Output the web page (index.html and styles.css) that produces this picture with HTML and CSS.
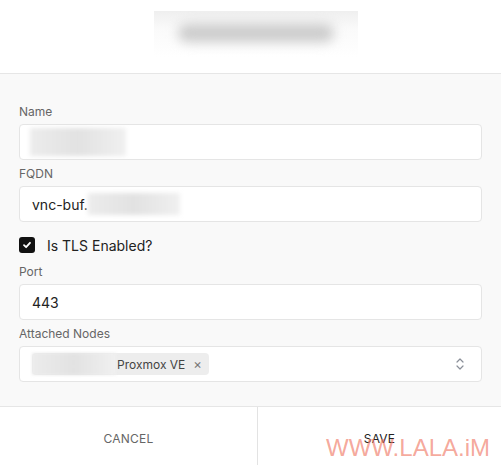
FILE: index.html
```html
<!DOCTYPE html>
<html lang="en">
<head>
  <meta charset="UTF-8">
  <meta name="viewport" content="width=device-width, initial-scale=1.0">
  <title>Edit Node</title>
  <link rel="stylesheet" href="styles.css">
</head>
<body>
  <div class="dialog">
    <div class="dialog-header">
      <div class="title-blur"><div class="blob"></div></div>
    </div>

    <form class="dialog-body">
      <div class="field">
        <label>Name</label>
        <div class="input"><span class="redacted name-redacted"></span></div>
      </div>
      <div class="field">
        <label>FQDN</label>
        <div class="input">vnc-buf.<span class="redacted fqdn-redacted"></span></div>
      </div>
      <div class="check-row">
        <span class="checkbox">
          <svg width="10" height="10" viewBox="0 0 10 10"><path d="M2 5.2 L4.1 7.2 L8 2.8" fill="none" stroke="#fff" stroke-width="1.8" stroke-linecap="round" stroke-linejoin="round"/></svg>
        </span>
        <span>Is TLS Enabled?</span>
      </div>
      <div class="field">
        <label>Port</label>
        <div class="input">443</div>
      </div>
      <div class="field">
        <label>Attached Nodes</label>
        <div class="input select">
          <span class="chip">
            <span class="redacted chip-redacted"></span>
            <span class="chip-text">Proxmox VE</span>
            <span class="chip-x">&times;</span>
          </span>
          <svg class="chevrons" width="10" height="14" viewBox="0 0 10 14"><path d="M2 5 L5 2 L8 5 M2 9 L5 12 L8 9" fill="none" stroke="#8a8f98" stroke-width="1.2" stroke-linecap="round" stroke-linejoin="round"/></svg>
        </div>
      </div>
    </form>

    <div class="dialog-footer">
      <button type="button" class="btn cancel">Cancel</button>
      <button type="button" class="btn save">Save</button>
      <span class="watermark">WWW.LALA.iM</span>
    </div>
  </div>
</body>
</html>
```

FILE: styles.css
```css
body {
  margin: 0;
  font-family: Inter, 'Noto Sans', sans-serif;
  background: #fff;
}
.dialog {
  width: 501px;
  height: 465px;
  display: flex;
  flex-direction: column;
  overflow: hidden;
}
.dialog-header {
  height: 74px;
  border-bottom: 1px solid #e6e6e6;
  display: flex;
  justify-content: center;
  padding-top: 11px;
  box-sizing: border-box;
  flex-shrink: 0;
}
.title-blur {
  width: 204px;
  height: 46px;
  margin-left: 10px;
  background: linear-gradient(#efefef, #fafafa 40%, #fff);
  display: flex;
  align-items: center;
  justify-content: center;
  overflow: hidden;
}
.blob {
  width: 156px;
  height: 18px;
  margin-top: -2px;
  background: #cbcbcb;
  border-radius: 9px;
  filter: blur(6px);
}
.dialog-body {
  background: #f9f9f9;
  padding: 30px 19px 24px 19px;
  display: flex;
  flex-direction: column;
  gap: 6px;
  border-bottom: 1px solid #e6e6e6;
  margin: 0;
}
.field {
  display: flex;
  flex-direction: column;
  gap: 4px;
}
.field label {
  font-size: 12px;
  line-height: 16px;
  color: #666;
}
.input {
  height: 36px;
  box-sizing: border-box;
  background: #fff;
  border: 1px solid #e5e5e5;
  border-radius: 4px;
  padding: 0 12px;
  display: flex;
  align-items: center;
  font-size: 14px;
  color: #222;
}
.redacted {
  display: inline-block;
  background: linear-gradient(90deg, #ececec, #e2e2e2 50%, #f0f0f0);
  filter: blur(2px);
}
.name-redacted {
  width: 96px;
  height: 28px;
  margin-left: -2px;
}
.fqdn-redacted {
  width: 92px;
  height: 22px;
}
.check-row {
  display: flex;
  align-items: center;
  gap: 12px;
  font-size: 14px;
  color: #222;
  margin: 9px 0 5px;
  height: 16px;
}
.checkbox {
  width: 16px;
  height: 16px;
  border-radius: 3px;
  background: #111;
  display: flex;
  align-items: center;
  justify-content: center;
}
.select {
  padding-left: 12px;
  justify-content: space-between;
}
.chip {
  display: flex;
  align-items: center;
  height: 22px;
  background: #ededed;
  border-radius: 4px;
  padding-right: 7px;
  font-size: 12px;
  color: #444;
}
.chip-redacted {
  width: 84px;
  height: 22px;
  filter: blur(1.5px);
}
.chip-text {
  margin-left: 1px;
}
.chip-x {
  margin-left: 8px;
  color: #777;
  font-size: 13px;
}
.chevrons {
  margin-right: 4px;
}
.dialog-footer {
  flex: 1;
  display: grid;
  grid-template-columns: 258px 1fr;
  position: relative;
}
.btn {
  border: none;
  background: #fff;
  font-family: inherit;
  font-size: 12px;
  text-transform: uppercase;
  letter-spacing: 0.2px;
  cursor: pointer;
  padding: 4px 0 0;
}
.cancel {
  color: #666;
  border-right: 1px solid #e3e3e3;
}
.save {
  color: #222;
}
.watermark {
  position: absolute;
  right: 11px;
  top: 27px;
  font-family: 'Liberation Sans', Arial, sans-serif;
  font-size: 24px;
  color: rgba(240, 120, 100, 0.65);
  pointer-events: none;
}
```
